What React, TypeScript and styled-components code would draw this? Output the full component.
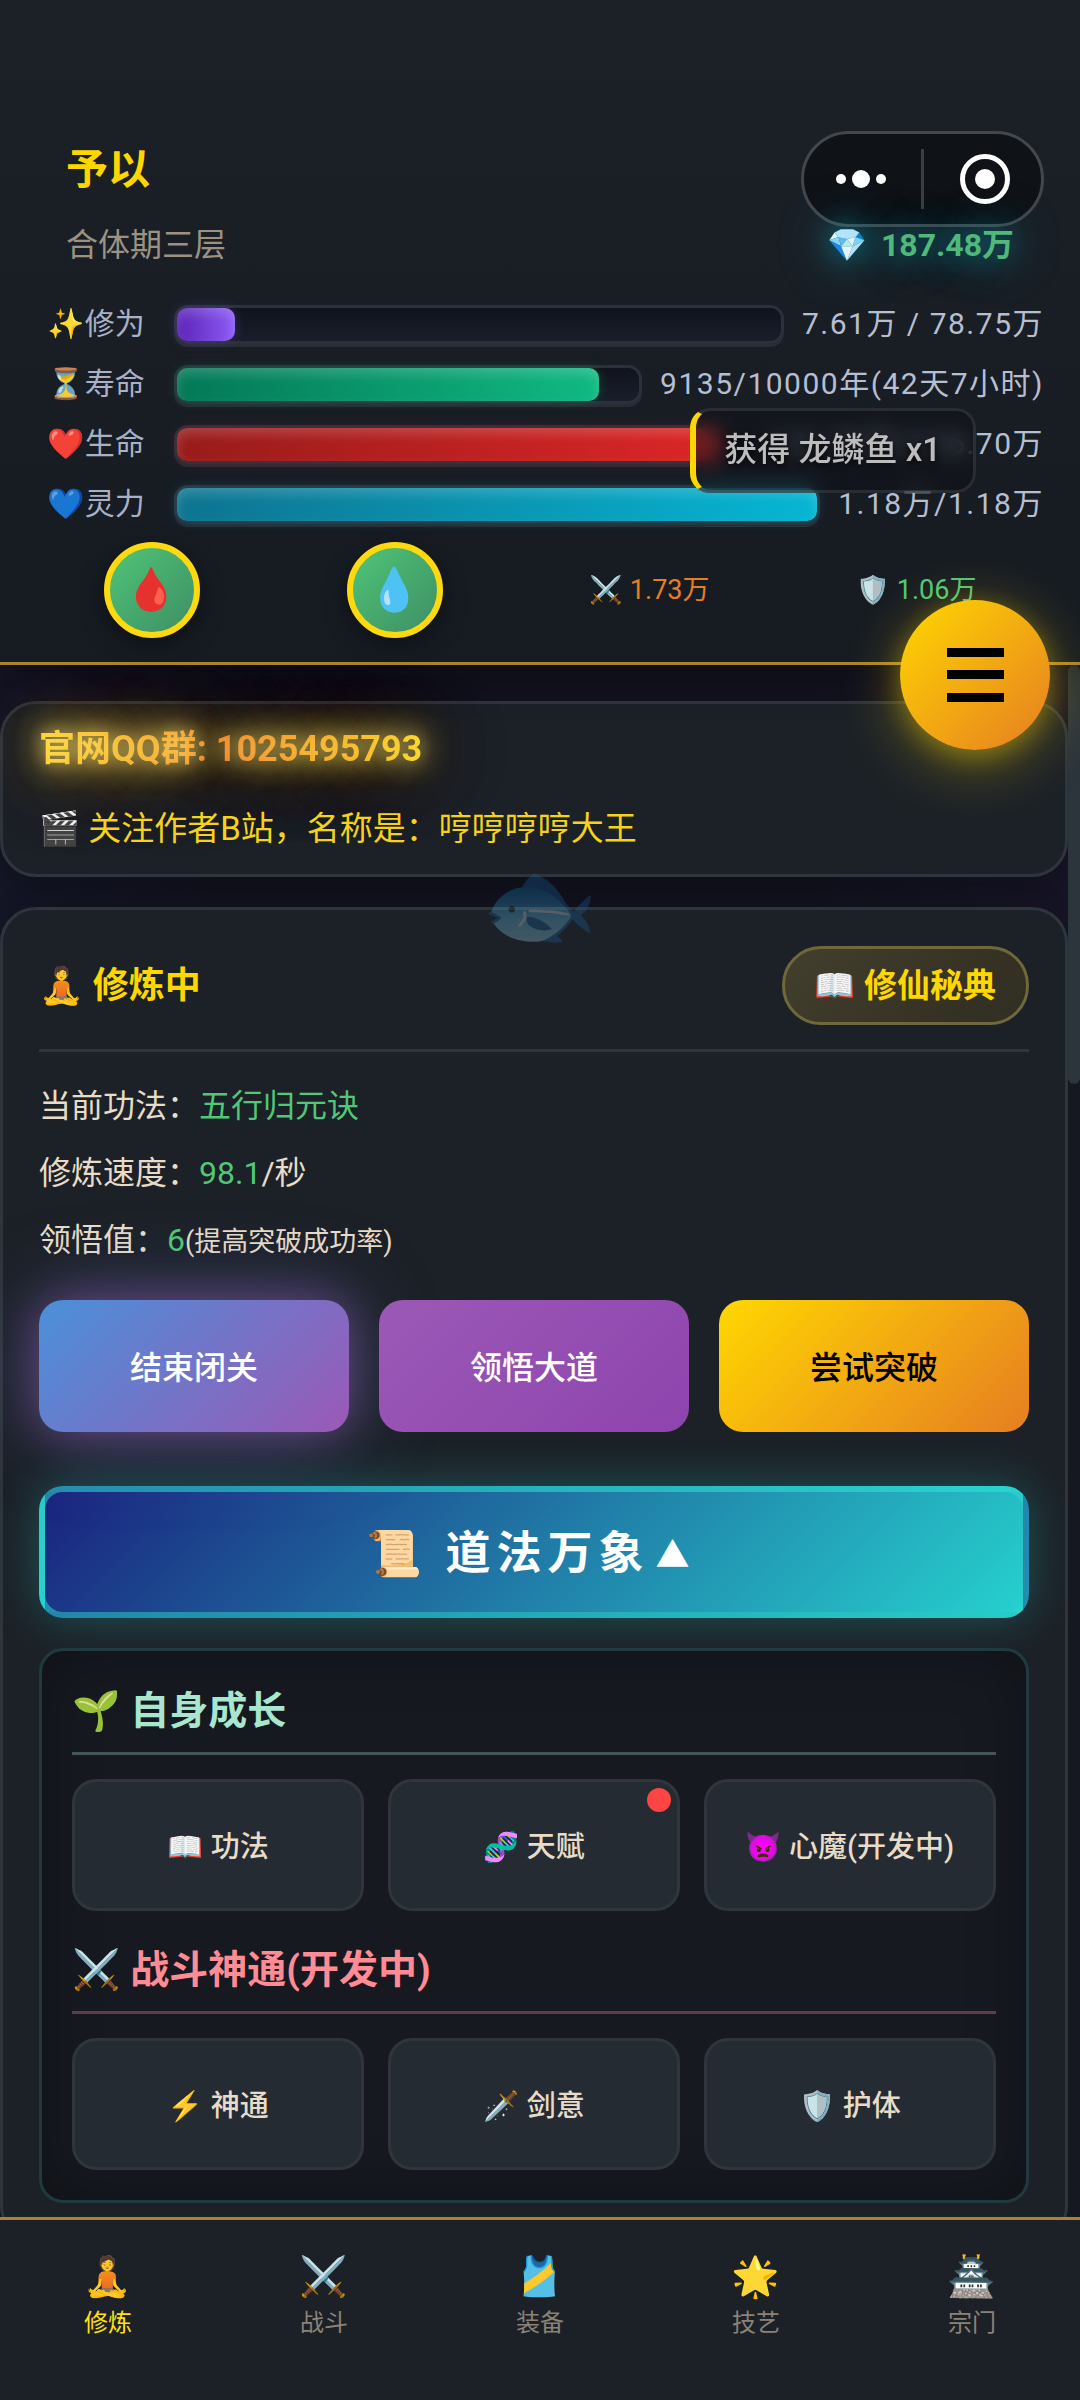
import React from 'react';
import styled, { createGlobalStyle, css } from 'styled-components';

const GlobalStyle = createGlobalStyle`
  *, *::before, *::after { box-sizing: border-box; }
  body {
    margin: 0;
    background: #12131e;
    color: #e8dcc8;
    font-family: Roboto, "Noto Sans CJK SC", "Noto Color Emoji", sans-serif;
    font-size: 32px;
    line-height: 42px;
  }
  button { font: inherit; color: inherit; cursor: pointer; padding: 0; }
  h1, h2, h3, p { margin: 0; }
`;

const Shell = styled.div`
  position: relative;
  display: flex;
  flex-direction: column;
  height: 100vh;
  overflow: hidden;
`;

/* ---------- header ---------- */

const Header = styled.header`
  position: relative;
  z-index: 2;
  flex: none;
  padding: 142px 36px 24px;
  background: linear-gradient(180deg, #1c2128, #161b22);
  border-bottom: 3px solid #a9842c;
  box-shadow: 0 12px 36px rgba(0, 0, 0, 0.3);
`;

const Capsule = styled.div`
  position: absolute;
  top: 131px;
  right: 36px;
  width: 243px;
  height: 96px;
  display: flex;
  align-items: center;
  border: 3px solid #43474c;
  border-radius: 48px;
  background: #0f1217;
`;

const CapsuleButton = styled.button`
  flex: 1;
  height: 60px;
  display: flex;
  align-items: center;
  justify-content: center;
  padding-right: 4px;
  border: 0;
  background: none;
  & + & {
    padding: 0 0 0 4px;
    border-left: 3px solid #3b3f44;
  }
`;

const Identity = styled.div`
  position: relative;
  padding: 0 30px;
  pointer-events: none;
`;

const PlayerName = styled.h1`
  font-size: 42px;
  line-height: 56px;
  font-weight: 700;
  color: #ffd700;
`;

const RealmRow = styled.div`
  display: flex;
  justify-content: space-between;
  margin-top: 26px;
  color: #9c9284;
`;

const Wallet = styled.span`
  display: flex;
  gap: 14px;
  font-weight: 700;
  color: #50b878;
  text-shadow: 0 0 30px rgba(0, 188, 212, 0.7), 0 0 60px rgba(0, 188, 212, 0.4);
`;

const Bars = styled.div`
  display: flex;
  flex-direction: column;
  gap: 18px;
  margin-top: 37px;
  font-size: 30px;
  color: #a9b1c6;
`;

const BarRow = styled.div`
  display: flex;
  align-items: center;
  gap: 18px;
`;

const BarLabel = styled.span`
  width: 120px;
  text-align: center;
  white-space: nowrap;
`;

const BarValue = styled.span`
  letter-spacing: 0.05em;
  white-space: nowrap;
  color: #b6bed2;
`;

const Track = styled.div`
  flex: 1;
  height: 39px;
  border: 3px solid #2b313c;
  border-radius: 14px;
  background: linear-gradient(180deg, #10131c, #191e2b);
  box-shadow: 0 3px 0 rgba(255, 255, 255, 0.07);
`;

const Fill = styled.div<{ $from: string; $to: string }>`
  height: 100%;
  border-radius: 10px;
  background: linear-gradient(90deg, ${p => p.$from}, ${p => p.$to});
  box-shadow: inset 0 6px 12px rgba(255, 255, 255, 0.18), 0 0 12px ${p => p.$to}40;
`;

const StatsRow = styled.div`
  display: flex;
  align-items: center;
  justify-content: space-around;
  margin: 17px -6px 0;
  font-size: 27px;
`;

const Potion = styled.button`
  width: 96px;
  height: 96px;
  border: 6px solid #ffd90f;
  border-radius: 50%;
  background: linear-gradient(135deg, #50c878, #3d8b63);
  background-origin: border-box;
  box-shadow: 0 6px 24px rgba(0, 0, 0, 0.4);
  font-size: 42px;
  line-height: 84px;
`;

const Stat = styled.span<{ $color: string }>`
  color: ${p => p.$color};
  white-space: nowrap;
`;

/* ---------- floating items ---------- */

const Toast = styled.div`
  position: absolute;
  z-index: 4;
  top: 408px;
  right: 104px;
  padding: 18px 32px 19px 28px;
  border: 3px solid rgba(255, 255, 255, 0.1);
  border-left: 6px solid #ffd700;
  border-radius: 20px;
  background: rgba(12, 14, 19, 0.5);
  backdrop-filter: blur(10px);
  color: #bdbdbd;
  font-size: 33px;
  font-weight: 500;
  text-shadow: 0 3px 6px rgba(0, 0, 0, 0.8);
  white-space: nowrap;
`;

const MenuButton = styled.button`
  position: absolute;
  z-index: 5;
  top: 600px;
  right: 30px;
  width: 150px;
  height: 150px;
  display: flex;
  align-items: center;
  justify-content: center;
  border: 0;
  border-radius: 50%;
  background: linear-gradient(135deg, #ffd700, #e67e22);
  box-shadow: 0 12px 60px rgba(255, 215, 0, 0.4), 0 6px 24px rgba(255, 215, 0, 0.3);
`;

const DriftingFish = styled.div`
  position: absolute;
  z-index: 3;
  top: 851px;
  left: 0;
  right: 0;
  text-align: center;
  font-size: 94px;
  line-height: 108px;
  opacity: 0.3;
  pointer-events: none;
`;

/* ---------- main ---------- */

const Main = styled.main`
  flex: 1;
  min-height: 0;
  display: flex;
  background: linear-gradient(90deg, #151627, #12131f 20%, #12131f 75%, #171527);
`;

const Scroller = styled.div`
  flex: 1;
  min-width: 0;
  padding-top: 36px;
  overflow-y: auto;
  scrollbar-width: none;
`;

const ScrollRail = styled.div`
  flex: none;
  width: 12px;
  background: #161821;
`;

const ScrollThumb = styled.div`
  height: 27%;
  border-radius: 6px;
  background: #2c343c;
`;

const Card = styled.section<{ $compact?: boolean }>`
  margin-bottom: 30px;
  padding: ${p => (p.$compact ? '24px 36px' : '36px')};
  border: 3px solid #2f353c;
  border-radius: 36px;
  background: #1c2127;
  box-shadow: 0 12px 36px rgba(0, 0, 0, 0.25);
`;

const GroupLine = styled.p`
  width: fit-content;
  margin-bottom: 38px;
  font-size: 36px;
  font-weight: 700;
  color: transparent;
  background: linear-gradient(90deg, #ffe030, #f58038 50%, #ffe020);
  background-clip: text;
  -webkit-background-clip: text;
  text-shadow: 0 0 15px rgba(255, 235, 150, 0.35), 0 0 30px rgba(255, 220, 90, 0.7),
    0 0 30px rgba(255, 215, 70, 0.5), 0 0 60px rgba(255, 200, 34, 0.6),
    0 0 90px rgba(230, 126, 34, 0.5);
`;

const AuthorLine = styled.p`
  font-size: 33px;
  color: #f5d31c;
`;

const CardHead = styled.div`
  display: flex;
  align-items: center;
  justify-content: space-between;
  padding-bottom: 24px;
  border-bottom: 3px solid #2f353c;
`;

const CardTitle = styled.h2`
  font-size: 36px;
  font-weight: 700;
  color: #ffd700;
`;

const GuideButton = styled.button`
  height: 79px;
  padding: 0 30px;
  border: 3px solid #6f683a;
  border-radius: 39px;
  background: linear-gradient(135deg, #423f2d, #302d22);
  font-size: 33px;
  font-weight: 700;
  color: #ffd700;
`;

const Facts = styled.div`
  display: flex;
  flex-direction: column;
  gap: 18px;
  margin: 30px 0 33px;
  line-height: 49px;
`;

const Good = styled.span`
  color: #50c878;
`;

const Note = styled.span`
  font-size: 27px;
`;

const ThreeColumns = styled.div<{ $gap: number }>`
  display: grid;
  grid-template-columns: repeat(3, 1fr);
  gap: ${p => p.$gap}px;
`;

const ActionButton = styled.button<{ $from: string; $to: string; $ink?: string; $glow?: boolean }>`
  height: 132px;
  padding-top: 4px;
  border: 0;
  border-radius: 24px;
  background: linear-gradient(135deg, ${p => p.$from}, ${p => p.$to});
  color: ${p => p.$ink ?? '#ffffff'};
  font-weight: 500;
  ${p => p.$glow && css`
    box-shadow: 0 0 45px rgba(155, 89, 182, 0.5), 0 0 90px rgba(110, 120, 217, 0.4);
  `}
`;

const ExpandButton = styled.button`
  display: block;
  width: 100%;
  height: 132px;
  margin: 54px 0 30px;
  padding-top: 4px;
  border: 6px solid rgba(44, 215, 205, 0.55);
  border-radius: 24px;
  background: linear-gradient(135deg, #1a237e, #26d0ce);
  box-shadow: 0 0 45px rgba(38, 208, 206, 0.3);
  color: #ffffff;
  font-size: 45px;
  font-weight: 700;
  letter-spacing: 6px;
`;

const Caret = styled.span`
  margin: 0 6px;
  font-size: 34px;
  vertical-align: 2px;
`;

const Panel = styled.div`
  display: flex;
  flex-direction: column;
  gap: 29px;
  padding: 30px;
  border: 3px solid #203a3f;
  border-radius: 24px;
  background: #161920;
  box-shadow: inset 0 0 60px rgba(0, 0, 0, 0.3);
`;

const GroupTitle = styled.h3<{ $color: string; $line: string }>`
  margin-bottom: 24px;
  padding-bottom: 11px;
  border-bottom: 3px solid ${p => p.$line};
  font-size: 39px;
  line-height: 60px;
  font-weight: 700;
  color: ${p => p.$color};
`;

const Tile = styled.button`
  position: relative;
  height: 132px;
  padding-top: 4px;
  border: 3px solid #2f353b;
  border-radius: 24px;
  background: #252b32;
  font-size: 29px;
  font-weight: 500;
  color: #e8dcc8;
`;

const Dot = styled.span`
  position: absolute;
  top: 6px;
  right: 6px;
  width: 24px;
  height: 24px;
  border-radius: 50%;
  background: #ff4444;
`;

/* ---------- bottom navigation ---------- */

const BottomNav = styled.nav`
  position: relative;
  z-index: 2;
  flex: none;
  display: grid;
  grid-template-columns: repeat(5, 1fr);
  height: 183px;
  padding-top: 33px;
  border-top: 3px solid #a9842c;
  background: #1c2127;
`;

const NavLink = styled.a<{ $active?: boolean }>`
  display: flex;
  flex-direction: column;
  align-items: center;
  gap: 4px;
  font-size: 24px;
  line-height: 36px;
  color: ${p => (p.$active ? '#ffe01a' : '#8b8378')};
  text-decoration: none;
`;

const NavIcon = styled.span`
  font-size: 39px;
  line-height: 48px;
`;

const bars = [
  { label: '✨修为', value: '7.61万 / 78.75万', percent: 9.66, from: '#5b21b6', to: '#8b5cf6' },
  { label: '⏳寿命', value: '9135/10000年(42天7小时)', percent: 91.35, from: '#047857', to: '#10b981' },
  { label: '❤️生命', value: '116.70万/116.70万', percent: 95.8, from: '#991b1b', to: '#dc2626' },
  { label: '💙灵力', value: '1.18万/1.18万', percent: 100, from: '#0e7490', to: '#06b6d4' },
];

const groups = [
  {
    title: '🌱 自身成长',
    color: '#a8e6cf',
    line: '#465658',
    tiles: [{ text: '📖 功法' }, { text: '🧬 天赋', dot: true }, { text: '👿 心魔(开发中)' }],
  },
  {
    title: '⚔️ 战斗神通(开发中)',
    color: '#ff8b94',
    line: '#5c3d48',
    tiles: [{ text: '⚡ 神通' }, { text: '🗡️ 剑意' }, { text: '🛡️ 护体' }],
  },
];

const tabs = [
  { icon: '🧘', text: '修炼' },
  { icon: '⚔️', text: '战斗' },
  { icon: '🎽', text: '装备' },
  { icon: '🌟', text: '技艺' },
  { icon: '🏯', text: '宗门' },
];

export default function App() {
  return (
    <>
      <GlobalStyle />
      <Shell>
        <Header>
          <Capsule>
            <CapsuleButton aria-label="更多">
              <svg width="52" height="20" viewBox="0 0 52 20" fill="#fff">
                <circle cx="6" cy="10" r="5" />
                <circle cx="26" cy="10" r="9" />
                <circle cx="46" cy="10" r="5" />
              </svg>
            </CapsuleButton>
            <CapsuleButton aria-label="关闭">
              <svg width="50" height="50" viewBox="0 0 50 50" fill="#fff">
                <circle cx="25" cy="25" r="22.5" fill="none" stroke="#fff" strokeWidth="5" />
                <circle cx="25" cy="25" r="10" />
              </svg>
            </CapsuleButton>
          </Capsule>
          <Identity>
            <PlayerName>予以</PlayerName>
            <RealmRow>
              <span>合体期三层</span>
              <Wallet><span>💎</span><span>187.48万</span></Wallet>
            </RealmRow>
          </Identity>
          <Bars>
            {bars.map(b => (
              <BarRow key={b.label}>
                <BarLabel>{b.label}</BarLabel>
                <Track role="progressbar" aria-label={b.label} aria-valuenow={b.percent}>
                  <Fill $from={b.from} $to={b.to} style={{ width: `${b.percent}%` }} />
                </Track>
                <BarValue>{b.value}</BarValue>
              </BarRow>
            ))}
          </Bars>
          <StatsRow>
            <Potion>🩸</Potion>
            <Potion>💧</Potion>
            <Stat $color="#e67e22">⚔️ 1.73万</Stat>
            <Stat $color="#50c878">🛡️ 1.06万</Stat>
          </StatsRow>
        </Header>

        <Main>
          <Scroller>
            <Card $compact>
              <GroupLine>官网QQ群: 1025495793</GroupLine>
              <AuthorLine>🎬 关注作者B站，名称是：哼哼哼哼大王</AuthorLine>
            </Card>
            <Card>
              <CardHead>
                <CardTitle>🧘 修炼中</CardTitle>
                <GuideButton>📖 修仙秘典</GuideButton>
              </CardHead>
              <Facts>
                <p>当前功法：<Good>五行归元诀</Good></p>
                <p>修炼速度：<Good>98.1</Good>/秒</p>
                <p>领悟值：<Good>6</Good><Note>(提高突破成功率)</Note></p>
              </Facts>
              <ThreeColumns $gap={30}>
                <ActionButton $from="#4a90d9" $to="#9b59b6" $glow>结束闭关</ActionButton>
                <ActionButton $from="#9b59b6" $to="#8e44ad">领悟大道</ActionButton>
                <ActionButton $from="#ffd700" $to="#e67e22" $ink="#000000">尝试突破</ActionButton>
              </ThreeColumns>
              <ExpandButton aria-expanded="true">📜 道法万象<Caret>▲</Caret></ExpandButton>
              <Panel>
                {groups.map(g => (
                  <div key={g.title}>
                    <GroupTitle $color={g.color} $line={g.line}>{g.title}</GroupTitle>
                    <ThreeColumns $gap={24}>
                      {g.tiles.map(t => (
                        <Tile key={t.text}>
                          {t.text}
                          {'dot' in t && t.dot && <Dot />}
                        </Tile>
                      ))}
                    </ThreeColumns>
                  </div>
                ))}
              </Panel>
            </Card>
          </Scroller>
          <ScrollRail><ScrollThumb /></ScrollRail>
        </Main>

        <BottomNav>
          {tabs.map((t, i) => (
            <NavLink key={t.text} href={`#tab-${i}`} $active={i === 0}>
              <NavIcon>{t.icon}</NavIcon>
              {t.text}
            </NavLink>
          ))}
        </BottomNav>

        <DriftingFish aria-hidden="true">🐟</DriftingFish>
        <Toast role="status">获得 龙鳞鱼 x1</Toast>
        <MenuButton aria-label="菜单">
          <svg width="57" height="54" viewBox="0 0 57 54" fill="#000">
            <rect width="57" height="9" />
            <rect y="22" width="57" height="9" />
            <rect y="45" width="57" height="9" />
          </svg>
        </MenuButton>
      </Shell>
    </>
  );
}
